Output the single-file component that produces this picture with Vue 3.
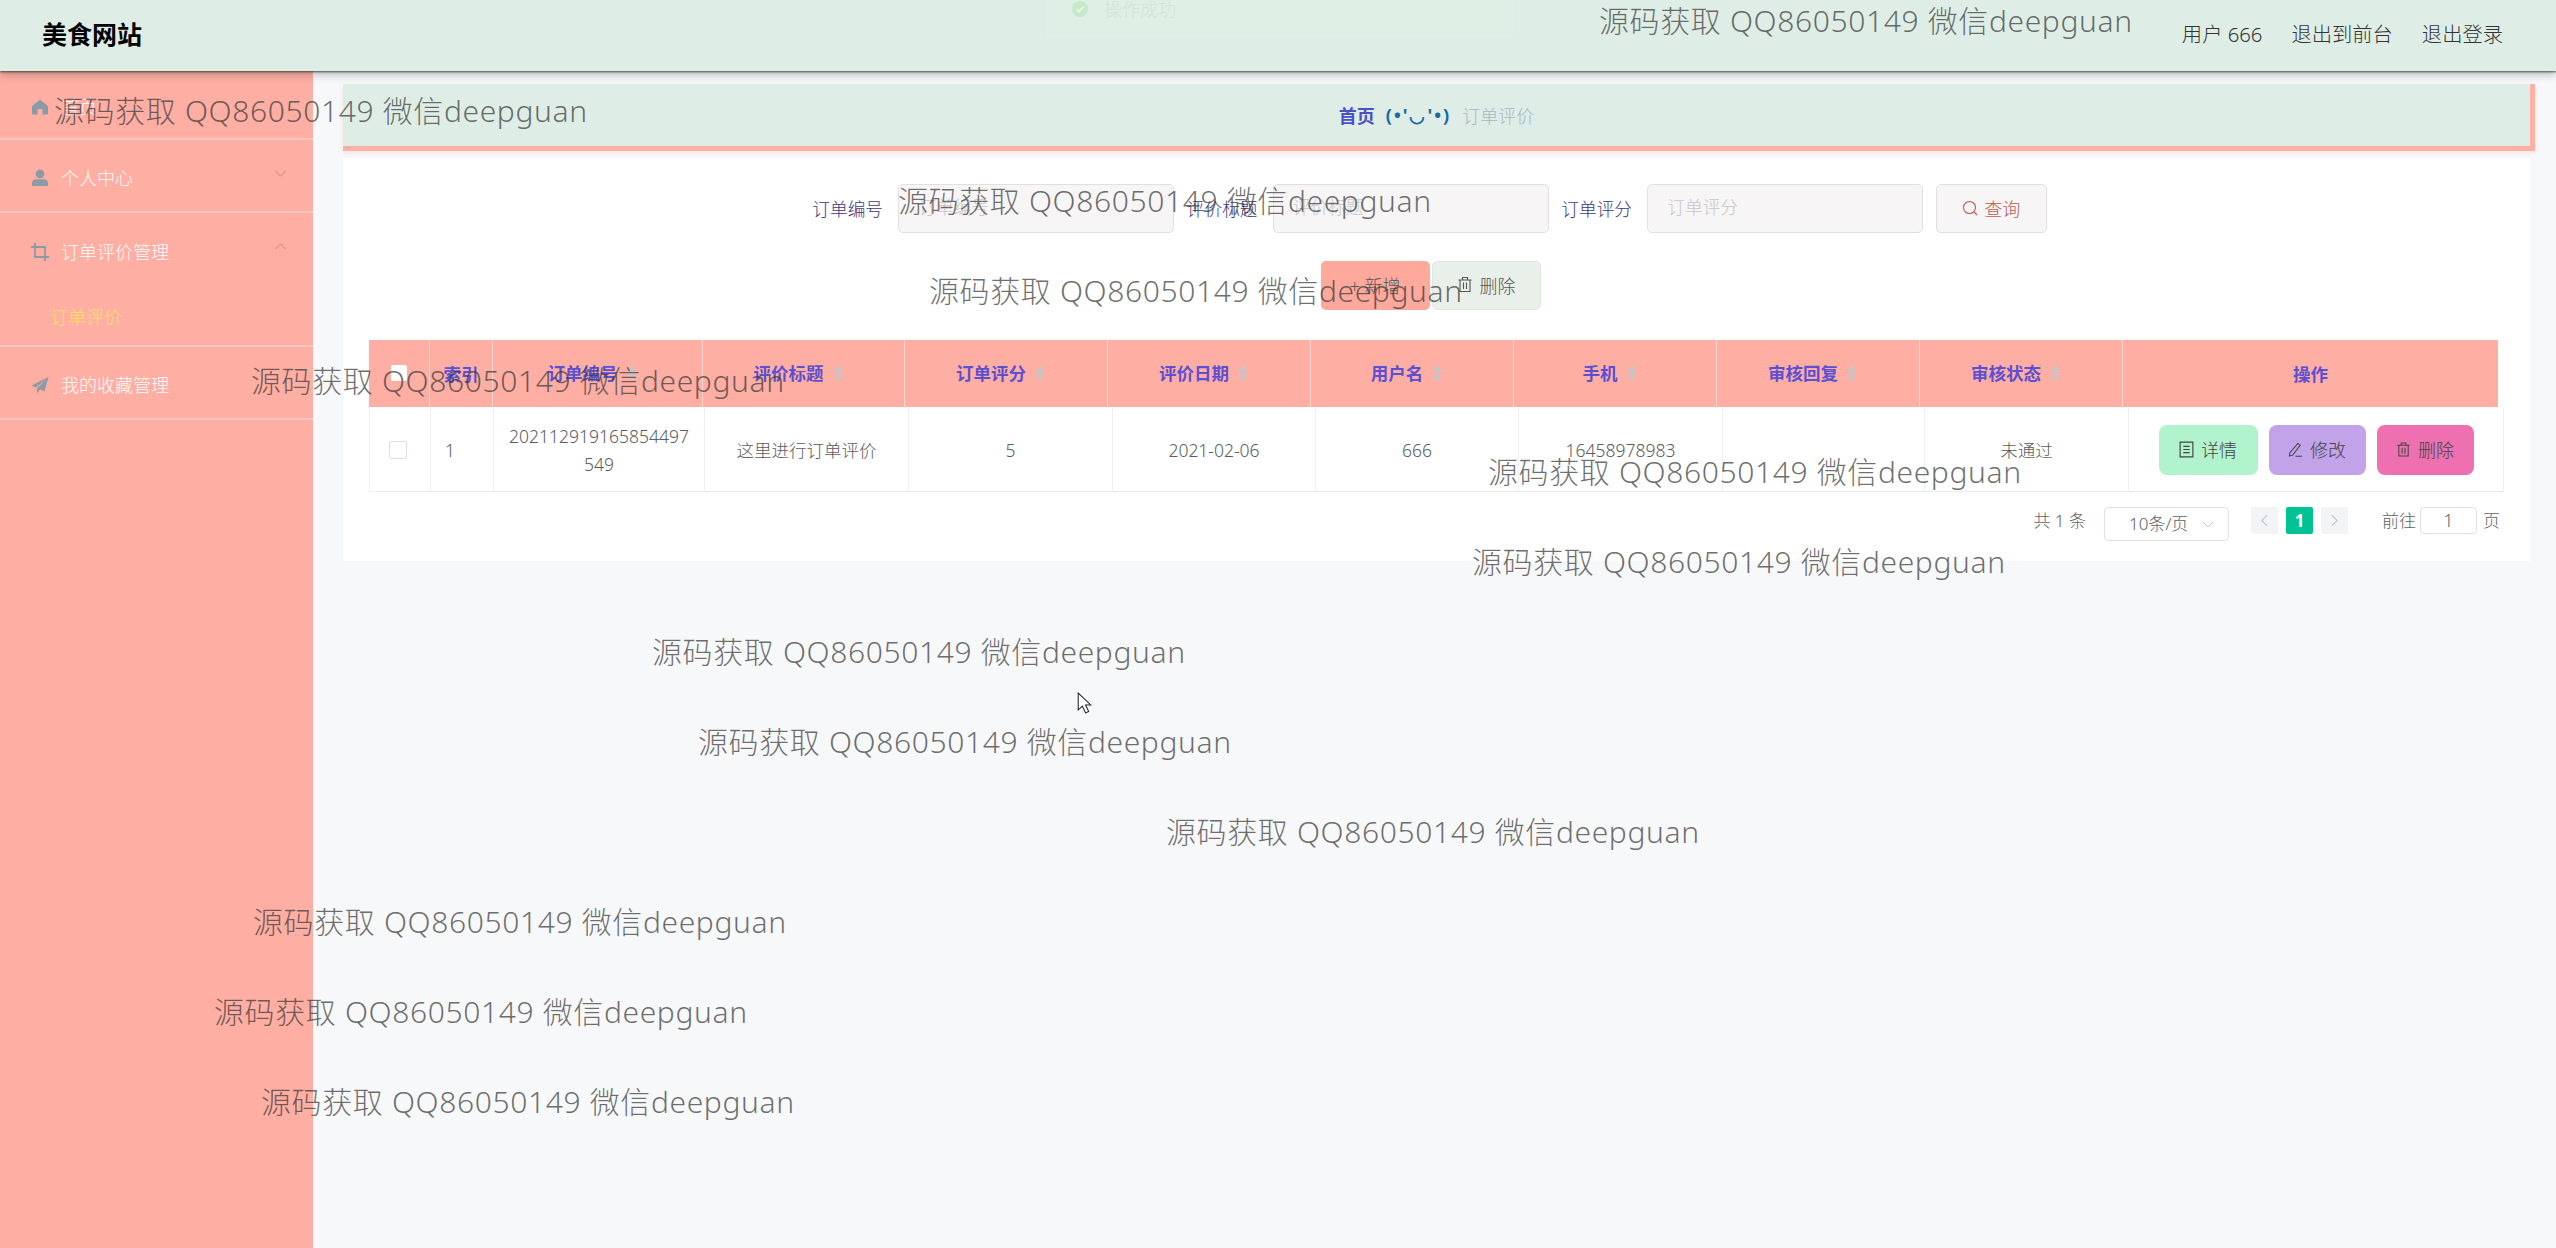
<script setup>
const marks = [
  [1599, 0], [54, 1], [898, 2], [929, 3], [251, 4], [1488, 5], [1472, 6],
  [652, 7], [698, 8], [1166, 9], [253, 10], [214, 11], [261, 12]
].map(([x, i]) => ({ left: x + 'px', top: (i * 90.1 - 2) + 'px' }))
const heads = ['订单编号', '评价标题', '订单评分', '评价日期', '用户名', '手机', '审核回复', '审核状态']
const watermark = '源码获取 QQ86050149 微信deepguan'
</script>

<template>
  <div class="page">
    <header class="top">
      <div class="brand">美食网站</div>
      <nav class="top-links">
        <span>用户 666</span>
        <span>退出到前台</span>
        <span>退出登录</span>
      </nav>
    </header>

    <div class="toast">
      <svg class="toast-icon" viewBox="0 0 20 20"><circle cx="10" cy="10" r="9" fill="#c6e9c9"/><path d="M6 10l3 3 5-6" fill="none" stroke="#e6f5e8" stroke-width="2"/></svg>
      <span>操作成功</span>
    </div>

    <div class="shell">
      <aside class="side">
        <div class="item first">
          <svg class="ico" viewBox="0 0 18 18"><path d="M9 1.500 1 8.200V16a.6.6 0 0 0 .6.6H6.600V11h4.800v5.600h5a.6.6 0 0 0 .6-.6V8.200z" fill="#8b9aa5"/></svg>
          <span>首页</span>
        </div>
        <div class="item">
          <svg class="ico" viewBox="0 0 18 18"><circle cx="9" cy="5" r="4.400" fill="#8b9aa5"/><path d="M1 17v-3c0-2.400 2-3.800 4-3.800h8c2 0 4 1.400 4 3.800v3z" fill="#8b9aa5"/></svg>
          <span>个人中心</span>
          <svg class="chev" viewBox="0 0 14 8"><path d="M1 1l6 6 6-6" fill="none" stroke="#d9776f" stroke-width="1.100"/></svg>
        </div>
        <div class="group">
          <div class="item plain">
            <svg class="ico" viewBox="0 0 18 18"><path d="M4 0v14h14M0 4h14v14" fill="none" stroke="#8b9aa5" stroke-width="1.800"/></svg>
            <span>订单评价管理</span>
            <svg class="chev" viewBox="0 0 14 8"><path d="M1 7l6-6 6 6" fill="none" stroke="#d9776f" stroke-width="1.100"/></svg>
          </div>
          <div class="sub">订单评价</div>
        </div>
        <div class="item">
          <svg class="ico" viewBox="0 0 18 18"><path d="M17.500 1 .5 9.500l4.500 2zM17.500 1 6 12.300V17l3-3.600 4.500 1.800z" fill="#8b9aa5"/></svg>
          <span>我的收藏管理</span>
        </div>
      </aside>

      <main class="main">
        <div class="crumb">
          <b>首页</b>
          <span class="face">(•'◡'•)</span>
          <span class="cur">订单评价</span>
        </div>

        <section class="panel">
          <form class="search" @submit.prevent>
            <label>订单编号</label>
            <div class="field">订单编号</div>
            <label>评价标题</label>
            <div class="field">评价标题</div>
            <label>订单评分</label>
            <div class="field">订单评分</div>
            <button class="query" type="button">
              <svg viewBox="0 0 16 16"><circle cx="7.500" cy="7.500" r="6" fill="none" stroke="#c05a50" stroke-width="1.100"/><path d="M12 12l3 3" stroke="#c05a50" stroke-width="1.100"/></svg>
              查询
            </button>
          </form>

          <div class="actions">
            <button class="add" type="button">+ 新增</button>
            <button class="del" type="button">
              <svg viewBox="0 0 16 16"><path d="M1.500 3.500h13M5.500 3.500V1h5v2.500M3 3.500V15h10V3.500M6.500 6v6.500M9.500 6v6.500" fill="none" stroke="#555" stroke-width="1.100"/></svg>
              删除
            </button>
          </div>

          <div class="table">
            <div class="thead">
              <div class="th"><i class="check-head"></i></div>
              <div class="th"><b>索引</b></div>
              <div v-for="h in heads" :key="h" class="th sortable">
                <b>{{ h }}</b>
                <svg class="sort" viewBox="0 0 10 18"><path d="M5 0l5 7.500H0zM5 18l5-7.500H0z" fill="#c3c5cc"/></svg>
              </div>
              <div class="th"><b>操作</b></div>
            </div>
            <div class="tbody">
              <div class="td"><i class="check"></i></div>
              <div class="td index">1</div>
              <div class="td wrap">202112919165854497<br>549</div>
              <div class="td">这里进行订单评价</div>
              <div class="td">5</div>
              <div class="td">2021-02-06</div>
              <div class="td">666</div>
              <div class="td">16458978983</div>
              <div class="td"></div>
              <div class="td">未通过</div>
              <div class="td ops">
                <button class="op green" type="button">
                  <svg viewBox="0 0 14 16"><path d="M1 1h12v14H1zM4 5h6M4 8h6M4 11h6" fill="none" stroke="#444" stroke-width="1.100"/></svg>
                  详情
                </button>
                <button class="op purple" type="button">
                  <svg viewBox="0 0 16 16"><path d="M10.500 1.500l2.500 2L5 14l-3.500 1 .5-3.500zM8 15.300h7" fill="none" stroke="#444" stroke-width="1.100"/></svg>
                  修改
                </button>
                <button class="op pink" type="button">
                  <svg viewBox="0 0 16 16"><path d="M1.500 3.500h13M5.500 3.500V1h5v2.500M3 3.500V15h10V3.500M6.500 6v6.500M9.500 6v6.500" fill="none" stroke="#444" stroke-width="1.100"/></svg>
                  删除
                </button>
              </div>
            </div>
          </div>

          <div class="pager">
            <span class="total">共 1 条</span>
            <div class="size">
              10条/页
              <svg viewBox="0 0 14 8"><path d="M1 1l6 6 6-6" fill="none" stroke="#c0c4cc" stroke-width="1.100"/></svg>
            </div>
            <div class="pg">
              <svg viewBox="0 0 8 14"><path d="M7 1 1 7l6 6" fill="none" stroke="#b5b8bf" stroke-width="1.200"/></svg>
            </div>
            <div class="pg on">1</div>
            <div class="pg">
              <svg viewBox="0 0 8 14"><path d="M1 1l6 6-6 6" fill="none" stroke="#b5b8bf" stroke-width="1.200"/></svg>
            </div>
            <span class="goto">前往</span>
            <div class="jump">1</div>
            <span class="unit">页</span>
          </div>
        </section>
      </main>
    </div>

    <div v-for="(m, i) in marks" :key="i" class="mark" :style="m">{{ watermark }}</div>

    <svg class="cursor" viewBox="0 0 14 22"><path d="M1 1v16l4-3.500 3 6.500 3-1.400-3-6.200h5z" fill="#fff" stroke="#222" stroke-width="1"/></svg>
  </div>
</template>

<style>
html, body { margin: 0; background: #f7f8fa; }
</style>

<style scoped>
.page {
  position: relative;
  height: 1248px;
  overflow: hidden;
  background: #f7f8fa;
  font-family: "Noto Sans", "Noto Sans CJK SC", sans-serif;
  font-weight: 300;
  color: #555;
}
.top {
  position: relative;
  z-index: 3;
  height: 71px;
  box-sizing: border-box;
  display: flex;
  align-items: center;
  justify-content: space-between;
  padding: 0 53px 6px 42px;
  background: #deeee6;
  box-shadow: 0 1px 2px rgba(30, 40, 35, .75), 0 3px 9px rgba(30, 40, 35, .3);
}
.brand { font-size: 25px; font-weight: 700; color: #000; }
.top-links { display: flex; gap: 29px; font-size: 20.300px; color: #333; }
.toast {
  position: absolute;
  z-index: 4;
  left: 1044px;
  top: -30px;
  width: 471px;
  height: 70px;
  box-sizing: border-box;
  padding: 18px 0 0 26px;
  display: flex;
  gap: 15px;
  border: 1px solid #dcede4;
  border-radius: 4px;
  background: #deefe6;
  font-size: 18px;
  color: #cfe5d5;
  line-height: 40px;
}
.toast-icon { width: 18px; height: 18px; margin-top: 11px; }
.shell { display: flex; height: 1177px; }
.side { width: 313px; flex: none; background: #ffaea3; color: #fffdf9; font-size: 18px; }
.item {
  position: relative;
  height: 73px;
  box-sizing: border-box;
  display: flex;
  align-items: center;
  gap: 12px;
  padding: 5px 0 0 32px;
  border-bottom: 2px solid #f3c6c1;
}
.item.first { height: 69px; }
.item span { line-height: 1; }
.item.plain { border-bottom: 0; }
.ico { width: 18px; height: 18px; flex: none; margin-left: -1px; }
.chev { position: absolute; left: 274px; top: 30px; width: 13px; height: 7px; }
.group { height: 134px; box-sizing: border-box; border-bottom: 2px solid #f3c6c1; }
.sub { padding: 16px 0 0 50px; color: #ffe45e; line-height: 30px; }
.main { flex: 1; min-width: 0; padding: 13px 21px 0 30px; }
.crumb {
  height: 62px;
  display: flex;
  align-items: center;
  justify-content: center;
  gap: 11px;
  background: #deeee6;
  border-right: 5px solid #ffb0a6;
  border-bottom: 5px solid #ffb0a6;
  box-shadow: 0 2px 4px rgba(255, 176, 166, .25);
  font-size: 18px;
}
.crumb b { color: #4b50c6; font-weight: 700; }
.face { color: #1c67a6; font-weight: 700; letter-spacing: 2px; }
.cur { color: #a6b6c6; }
.panel {
  width: 2187px;
  height: 403px;
  margin-top: 7px;
  box-sizing: border-box;
  padding: 26px 26px 0;
  background: #fff;
}
.search {
  display: flex;
  align-items: center;
  justify-content: center;
  padding-right: 14px;
  font-size: 17.700px;
}
.search label { width: 71px; margin: 0 15px 2px 0; color: #3a3a7a; white-space: nowrap; }
.field {
  width: 276px;
  height: 49px;
  box-sizing: border-box;
  margin-right: 12.500px;
  padding-left: 19px;
  line-height: 45px;
  background: #f7f5f5;
  border: 1px solid #e2dfdf;
  border-radius: 5px;
  color: #c6c6cc;
}
button { font-family: inherit; font-weight: 300; cursor: pointer; }
.query {
  width: 111px;
  height: 49px;
  display: flex;
  align-items: center;
  justify-content: center;
  gap: 6px;
  padding-bottom: 3px;
  background: #f7f5f5;
  border: 1px solid #e2dfdf;
  border-radius: 5px;
  font-size: 18px;
  color: #c05a50;
}
.query svg { width: 16px; height: 16px; }
.actions {
  display: flex;
  justify-content: center;
  gap: 2px;
  margin-top: 28px;
  padding-right: 12px;
}
.actions button {
  width: 109px;
  height: 49px;
  display: flex;
  align-items: center;
  justify-content: center;
  gap: 7px;
  padding-bottom: 3px;
  border-radius: 5px;
  font-size: 18px;
  color: #555;
}
.actions svg { width: 16px; height: 17px; }
.add { background: #ffa99c; border: 0; }
.del { background: #e9efe9; border: 1px solid #e2e6e2; }
.table { margin-top: 30px; }
.thead, .tbody { display: grid; }
.thead {
  grid-template-columns: 61px 63px 210px 202px 203px 203px 203px 203px 203px 203px 375px;
  width: 2129px;
  height: 67px;
  background: #ffaea3;
}
.th {
  display: flex;
  align-items: center;
  justify-content: center;
  gap: 8px;
  box-sizing: border-box;
  border-right: 1px solid #ffd5cf;
  font-size: 17.500px;
}
.th:last-child { border-right: 0; }
.th.sortable { padding: 0 10px 2px 0; }
.th b { color: #5b4fd2; font-weight: 700; }
.sort { width: 12px; height: 16px; }
.check-head { width: 16px; height: 16px; background: #fff; border-radius: 2px; margin-bottom: 2px; }
.tbody {
  grid-template-columns: 62px 63px 211px 204px 204px 203px 203px 204px 202px 204px 375px;
  width: 2135px;
  height: 85px;
  box-sizing: border-box;
  padding-top: 1px;
  border-bottom: 1px solid #e8ebf0;
}
.td {
  display: flex;
  align-items: center;
  justify-content: center;
  box-sizing: border-box;
  border-right: 1px solid #eef0f4;
  font-size: 17.500px;
  color: #5a5c60;
}
.td:first-child { border-left: 1px solid #eef0f4; }
.index { justify-content: flex-start; padding-left: 14px; }
.wrap { text-align: center; line-height: 28px; }
.check { width: 18px; height: 18px; box-sizing: border-box; border: 1px solid #dcdfe6; border-radius: 2px; background: #fff; margin-right: 5px; }
.ops { gap: 11px; }
.op {
  width: 97px;
  height: 50px;
  display: flex;
  align-items: center;
  justify-content: center;
  gap: 7px;
  padding-bottom: 2px;
  border: 0;
  border-radius: 8px;
  font-size: 18px;
  color: #444;
}
.op svg { width: 15px; height: 17px; }
.green { width: 99px; background: #b1f3cc; }
.purple { background: #c2a2e8; }
.pink { background: #ee70b0; }
.pager {
  display: flex;
  align-items: flex-start;
  justify-content: flex-end;
  height: 34px;
  margin-top: 15px;
  padding-right: 4px;
  font-size: 17px;
  color: #606266;
  line-height: 28px;
}
.total { margin-right: 18px; }
.size {
  width: 125px;
  height: 34px;
  box-sizing: border-box;
  position: relative;
  padding-left: 24px;
  border: 1px solid #dcdfe6;
  border-radius: 4px;
  line-height: 32px;
  margin-right: 22px;
}
.size svg { position: absolute; right: 14px; top: 13px; width: 12px; height: 7px; }
.pg {
  width: 27px;
  height: 27px;
  display: flex;
  align-items: center;
  justify-content: center;
  margin-right: 8px;
  background: #f2f4f5;
  border-radius: 2px;
}
.pg svg { width: 7px; height: 13px; }
.pg.on { background: #00c292; color: #fff; font-weight: 700; }
.goto { margin-left: 26px; margin-right: 4px; }
.jump {
  width: 57px;
  height: 27px;
  box-sizing: border-box;
  border: 1px solid #dcdfe6;
  border-radius: 4px;
  text-align: center;
  line-height: 25px;
  font-size: 18px;
}
.unit { margin-left: 6px; }
.mark {
  position: absolute;
  z-index: 10;
  font-size: 30px;
  letter-spacing: .62px;
  line-height: 45px;
  white-space: nowrap;
  color: rgba(55, 55, 55, .72);
  pointer-events: none;
}
.cursor { position: absolute; z-index: 11; left: 1077px; top: 692px; width: 15px; height: 23px; }
</style>
